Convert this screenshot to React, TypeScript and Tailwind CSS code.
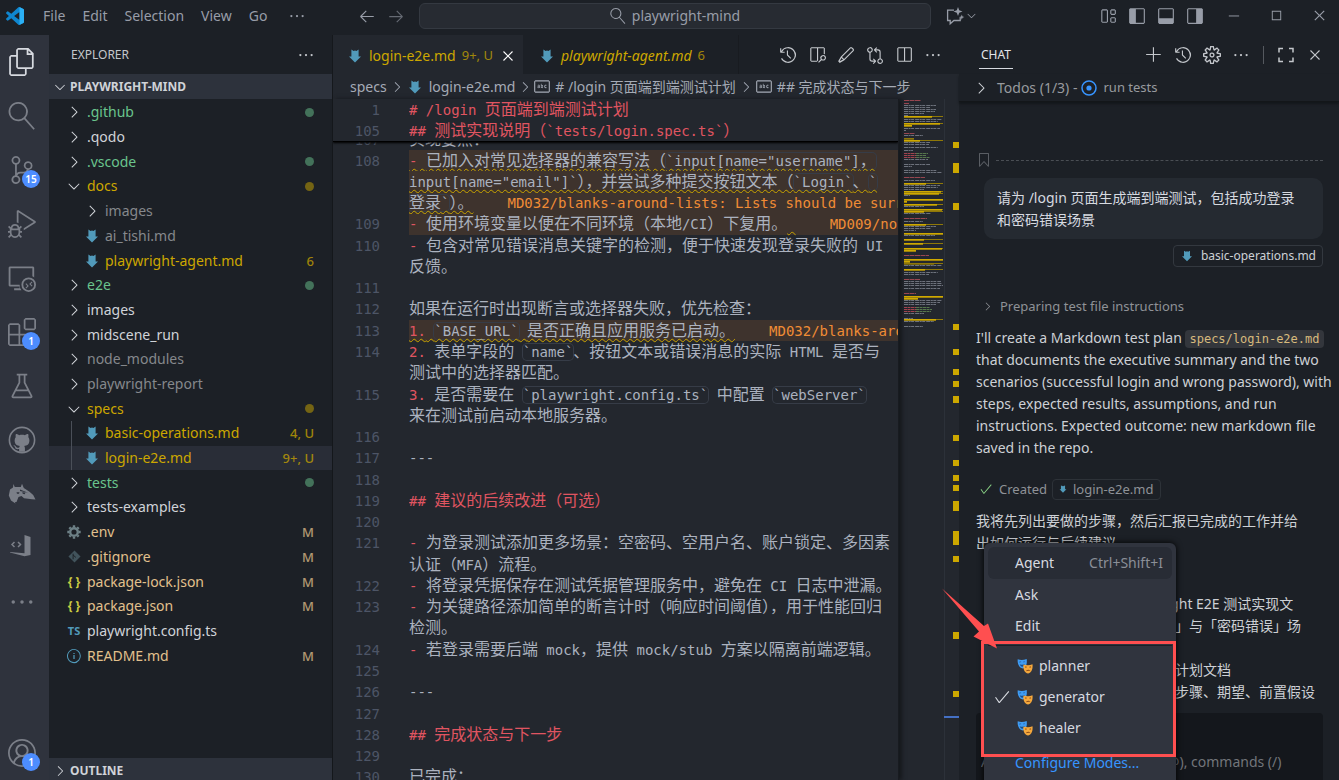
import React from 'react';
import clsx from 'clsx';
import {
  VscAccount,
  VscAdd,
  VscArrowLeft,
  VscArrowRight,
  VscBeaker,
  VscBookmark,
  VscCheck,
  VscChevronDown,
  VscChevronRight,
  VscChromeClose,
  VscChromeMaximize,
  VscChromeMinimize,
  VscClose,
  VscDebugAlt,
  VscEdit,
  VscEllipsis,
  VscExtensions,
  VscFiles,
  VscGitCompare,
  VscHistory,
  VscInfo,
  VscLayout,
  VscLayoutPanel,
  VscLayoutSidebarLeft,
  VscLayoutSidebarRight,
  VscOpenPreview,
  VscRemoteExplorer,
  VscSearch,
  VscSettingsGear,
  VscSourceControl,
  VscSplitHorizontal,
  VscSymbolString,
} from 'react-icons/vsc';

const CJK = /([\u2010-\u201f\u3000-\u303f\u4e00-\u9fff\uff00-\uffef]+)/;

// CJK glyphs are set a step larger than the monospace Latin text beside them
const Mixed: React.FC<{ children: string }> = ({ children }) => (
  <>
    {children.split(CJK).map((part, i) =>
      i % 2 ? (
        <span key={i} className="text-base leading-none">
          {part}
        </span>
      ) : (
        part
      )
    )}
  </>
);

const MarkdownIcon: React.FC<{ className?: string }> = ({ className = 'h-[14px] w-[12px]' }) => (
  <svg viewBox="0 0 12 14" className={clsx('shrink-0', className)} fill="#519aba">
    <path d="M2.4.6 4.6 2 6 1.4 7.4 2 9.6.6V7.4H12L6 13.4 0 7.4h2.4Z" />
  </svg>
);

const VsCodeLogo = () => (
  <svg viewBox="0 0 100 100" className="h-[18px] w-[18px]">
    <path
      fill="#0f86cf"
      d="M96.46 10.8 75.86.88a6.2 6.2 0 0 0-7.1 1.2L29.35 38.04 12.19 25.01a4.16 4.16 0 0 0-5.32.24L1.36 30.25a4.17 4.17 0 0 0 0 6.16L16.25 50 1.36 63.58a4.17 4.17 0 0 0 0 6.16l5.5 5.01c1.5 1.35 3.73 1.45 5.33.24l17.17-13.03 39.4 35.96a6.2 6.2 0 0 0 7.1 1.2l20.6-9.91A6.25 6.25 0 0 0 100 83.58V16.41a6.25 6.25 0 0 0-3.54-5.63ZM75 72.7 45.1 50 75 27.3Z"
    />
    <path fill="#2bb0f5" d="M75 .6 96.5 10.8a6.2 6.2 0 0 1 3.5 5.6v67.2a6.2 6.2 0 0 1-3.5 5.6L75 99.4Z" />
  </svg>
);

const GithubIcon = () => (
  <svg viewBox="0 0 28 28" className="h-7 w-7">
    <circle cx="14" cy="14" r="12.6" fill="none" stroke="currentColor" strokeWidth="1.6" />
    <path
      transform="translate(2.4 3.2) scale(1.45)"
      fill="currentColor"
      d="M5.47 15.59c.4.07.55-.17.55-.38 0-.19-.01-.82-.01-1.49-2.01.37-2.53-.49-2.69-.94-.09-.23-.48-.94-.82-1.13-.28-.15-.68-.52-.01-.53.63-.01 1.08.58 1.23.82.72 1.21 1.87.87 2.33.66.07-.52.28-.87.51-1.07-1.78-.2-3.64-.89-3.64-3.95 0-.87.31-1.59.82-2.15-.08-.2-.36-1.02.08-2.12 0 0 .67-.21 2.2.82.64-.18 1.32-.27 2-.27.68 0 1.36.09 2 .27 1.53-1.04 2.2-.82 2.2-.82.44 1.1.16 1.92.08 2.12.51.56.82 1.27.82 2.15 0 3.07-1.87 3.75-3.65 3.95.29.25.54.73.54 1.48v2.2c0 .21.15.46.55.38Z"
    />
  </svg>
);

const WolfIcon = () => (
  <svg viewBox="0 0 28 28" className="h-7 w-7" fill="currentColor">
    <path d="M5 7.500 5.400 4 6.800 7h6L14 3.700l1.800 4.300 5.700 3.800 3.700 3.200 2.300 4.500-3.500-.3-8-.9-2.500-2.300-3 1-2 5H7l.5 1.500L3 20.500.8 15.500 2 9.500Z" />
    <path fill="#2f333d" d="M8.500 12.200h3l-.5 1.600H9ZM14.200 12.200l3.300.4-.8 1.700-1.900-.5ZM12 9.500l8 3.300-8-1.800Z" />
  </svg>
);

const DevKitIcon = () => (
  <svg viewBox="0 0 28 28" className="h-7 w-7" fill="currentColor">
    <path d="M16.500 1 22.500 3v18l-6 1.300L2 18.500v-.6l14.500 1.400Z" />
    <path fill="none" stroke="currentColor" strokeWidth="1.5" d="M6.500 8 4 10.500l2.500 2.500M10 8l2.500 2.500L10 13" />
  </svg>
);

const MasksIcon = () => (
  <svg viewBox="0 0 16 16" className="h-4 w-4 shrink-0">
    <path fill="#3f9cf3" d="M.7 1.2c2.800 1.200 5.800 1 9-.2.6 4.500-.3 8.500-4 9.400C2.200 9.800.2 5.800.7 1.200Z" />
    <path fill="#1a4c86" d="M2.300 4c.8-.7 1.500-.6 2 .1l-2 .3ZM6.200 4c.8-.7 1.500-.6 2 .1l-2 .2ZM2.800 6.200c1.700.8 3.300.7 5-.2-.5 1.900-1.400 2.700-2.500 2.800-1.200-.2-2.100-1.100-2.500-2.600Z" />
    <path fill="#f5a83c" d="M6.500 6.400c3 1 6 1 9-.1.5 4-.6 8.400-4.300 9.200-3.600-.5-5.400-4.500-4.700-9.100Z" />
    <path fill="#7c3f12" d="M8 9c.8-.7 1.500-.6 2.100.2L8 9.500ZM12 9.200c.7-.8 1.500-.8 2.100-.2l-.2.5ZM8.600 13.300c1.600-2 3.400-2 5-.1-1.600-.6-3.400-.6-5 .1Z" />
  </svg>
);

const CopilotChatIcon = () => (
  <svg viewBox="0 0 20 20" className="h-5 w-5" fill="none" stroke="currentColor" strokeWidth="1.300">
    <path d="M9 4.200H2.600v10.300h2.600v3.300l3.700-3.300h6.300v-3.200" />
    <path fill="currentColor" stroke="none" d="m13 1 1.200 3.300L17.500 5.500l-3.300 1.200L13 10l-1.200-3.300L8.500 5.500l3.300-1.200ZM16.800 8.500l.7 1.900 1.900.7-1.900.7-.7 1.900-.7-1.900-1.900-.7 1.900-.7Z" />
  </svg>
);

const CornersIcon = () => (
  <svg viewBox="0 0 18 18" className="h-[18px] w-[18px]" fill="none" stroke="currentColor" strokeWidth="1.500">
    <path d="M2 6.500V2.500h4M12 2.500h4v4M16 11.500v4h-4M6 15.500H2v-4" />
  </svg>
);

const ProgressTarget = () => (
  <svg viewBox="0 0 16 16" className="h-4 w-4 shrink-0">
    <circle cx="8" cy="8" r="7" fill="none" stroke="#3794ff" strokeWidth="1.500" />
    <circle cx="8" cy="8" r="2.600" fill="#3794ff" />
  </svg>
);

const GitIcon = () => (
  <svg viewBox="0 0 14 14" className="h-[13px] w-[13px]">
    <path fill="#41535b" d="M7 .5 13.500 7 7 13.500.5 7Z" />
    <path stroke="#1c2026" strokeWidth="1" fill="none" d="M5.500 4v6M5.500 5.500 8.500 8" />
  </svg>
);

const GearFileIcon = () => (
  <svg viewBox="0 0 14 14" className="h-[14px] w-[14px]" fill="none" stroke="#6d8086">
    <circle cx="7" cy="7" r="3.800" strokeWidth="2.400" />
    <path strokeWidth="2.400" d="M7 .3v2M7 11.700v2M.3 7h2M11.700 7h2M2.300 2.300l1.400 1.400M10.300 10.300l1.400 1.400M2.300 11.700l1.400-1.400M10.300 3.700l1.400-1.400" />
  </svg>
);

/* ---------- title bar ---------- */

const TitleBar = () => (
  <header className="flex h-[35px] shrink-0 items-center bg-[#1c2026] pb-1 text-sm text-[#989da8]">
    <div className="flex w-[419px] shrink-0 items-center">
      <div className="w-[43px] pl-[6px]">
        <VsCodeLogo />
      </div>
      <nav className="flex items-center gap-[17px]">
        {['File', 'Edit', 'Selection', 'View', 'Go'].map((item) => (
          <button key={item}>{item}</button>
        ))}
        <button aria-label="More menus" className="pl-1">
          <VscEllipsis size={18} />
        </button>
      </nav>
      <div className="ml-auto flex gap-[11px] pr-[14px]">
        <button aria-label="Back">
          <VscArrowLeft size={18} />
        </button>
        <button aria-label="Forward" className="opacity-60">
          <VscArrowRight size={18} />
        </button>
      </div>
    </div>
    <button className="flex h-[26px] min-w-0 flex-1 items-center justify-center gap-[6px] rounded-md border border-[#343941] bg-[#272b32]">
      <VscSearch size={16} className="-scale-x-100" />
      playwright-mind
    </button>
    <div className="flex w-[408px] shrink-0 items-center">
      <button aria-label="Copilot" className="flex items-center pl-[14px]">
        <CopilotChatIcon />
        <VscChevronDown size={13} />
      </button>
      <div className="ml-auto flex gap-[11px] pr-[22px]">
        <button aria-label="Customize layout">
          <VscLayout size={18} />
        </button>
        <button aria-label="Toggle side bar">
          <VscLayoutSidebarLeft size={18} />
        </button>
        <button aria-label="Toggle panel">
          <VscLayoutPanel size={18} />
        </button>
        <button aria-label="Toggle secondary side bar">
          <VscLayoutSidebarRight size={18} />
        </button>
      </div>
      <div className="flex gap-[28px] pr-[12px]">
        <button aria-label="Minimize">
          <VscChromeMinimize size={15} />
        </button>
        <button aria-label="Maximize">
          <VscChromeMaximize size={15} />
        </button>
        <button aria-label="Close">
          <VscChromeClose size={15} />
        </button>
      </div>
    </div>
  </header>
);

/* ---------- activity bar ---------- */

interface Activity {
  label: string;
  icon: React.ReactNode;
  badge?: string;
  active?: boolean;
}

const activities: Activity[] = [
  { label: 'Explorer', icon: <VscFiles size={28} />, active: true },
  { label: 'Search', icon: <VscSearch size={28} className="-scale-x-100" /> },
  { label: 'Source control', icon: <VscSourceControl size={28} />, badge: '15' },
  { label: 'Run and debug', icon: <VscDebugAlt size={28} /> },
  { label: 'Remote explorer', icon: <VscRemoteExplorer size={28} /> },
  { label: 'Extensions', icon: <VscExtensions size={28} />, badge: '1' },
  { label: 'Testing', icon: <VscBeaker size={28} /> },
  { label: 'GitHub', icon: <GithubIcon /> },
  { label: 'Wolf', icon: <WolfIcon /> },
  { label: 'Dev kit', icon: <DevKitIcon /> },
  { label: 'More', icon: <VscEllipsis size={28} /> },
];

const ActivityButton: React.FC<Activity> = ({ label, icon, badge, active }) => (
  <button
    aria-label={label}
    className={clsx('relative flex h-[54px] w-full items-center pl-[8px]', active ? 'text-[#d7dae0]' : 'text-[#7b7f88]')}
  >
    {icon}
    {badge && (
      <span className="absolute top-[27px] left-[22px] flex h-[18px] w-[18px] items-center justify-center rounded-full bg-[#4d8dff] text-[10px] font-semibold text-white">
        {badge}
      </span>
    )}
  </button>
);

const ActivityBar = () => (
  <aside className="flex w-[49px] shrink-0 flex-col bg-[#2f333d]">
    {activities.map((a) => (
      <ActivityButton key={a.label} {...a} />
    ))}
    <div className="mt-auto">
      <ActivityButton label="Account" icon={<VscAccount size={28} />} badge="1" />
    </div>
  </aside>
);

/* ---------- explorer ---------- */

type Tone = 'green' | 'yellow' | 'plain' | 'ignored' | 'modified';

interface TreeRow {
  name: string;
  tone: Tone;
  kind: 'closed' | 'open' | 'md' | 'env' | 'git' | 'json' | 'ts' | 'info';
  nested?: boolean;
  guide?: boolean;
  selected?: boolean;
  status?: string;
  dot?: boolean;
}

const toneClass: Record<Tone, string> = {
  green: 'text-[#6ac48d]',
  yellow: 'text-[#cca700]',
  plain: 'text-[#d0d3d8]',
  ignored: 'text-[#85888c]',
  modified: 'text-[#e2c08d]',
};

const tree: TreeRow[] = [
  { name: '.github', tone: 'green', kind: 'closed', dot: true },
  { name: '.qodo', tone: 'plain', kind: 'closed' },
  { name: '.vscode', tone: 'green', kind: 'closed', dot: true },
  { name: 'docs', tone: 'yellow', kind: 'open', dot: true },
  { name: 'images', tone: 'ignored', kind: 'closed', nested: true },
  { name: 'ai_tishi.md', tone: 'ignored', kind: 'md', nested: true },
  { name: 'playwright-agent.md', tone: 'yellow', kind: 'md', nested: true, status: '6' },
  { name: 'e2e', tone: 'green', kind: 'closed', dot: true },
  { name: 'images', tone: 'plain', kind: 'closed' },
  { name: 'midscene_run', tone: 'plain', kind: 'closed' },
  { name: 'node_modules', tone: 'ignored', kind: 'closed' },
  { name: 'playwright-report', tone: 'ignored', kind: 'closed' },
  { name: 'specs', tone: 'yellow', kind: 'open', dot: true },
  { name: 'basic-operations.md', tone: 'yellow', kind: 'md', nested: true, guide: true, status: '4, U' },
  { name: 'login-e2e.md', tone: 'yellow', kind: 'md', nested: true, guide: true, status: '9+, U', selected: true },
  { name: 'tests', tone: 'green', kind: 'closed', dot: true },
  { name: 'tests-examples', tone: 'plain', kind: 'closed' },
  { name: '.env', tone: 'modified', kind: 'env', status: 'M' },
  { name: '.gitignore', tone: 'modified', kind: 'git', status: 'M' },
  { name: 'package-lock.json', tone: 'modified', kind: 'json', status: 'M' },
  { name: 'package.json', tone: 'modified', kind: 'json', status: 'M' },
  { name: 'playwright.config.ts', tone: 'plain', kind: 'ts' },
  { name: 'README.md', tone: 'modified', kind: 'info', status: 'M' },
];

const kindIcon: Record<TreeRow['kind'], React.ReactNode> = {
  closed: <VscChevronRight size={18} className="shrink-0 text-[#d0d3d8]" />,
  open: <VscChevronDown size={18} className="shrink-0 text-[#d0d3d8]" />,
  md: <MarkdownIcon />,
  env: <GearFileIcon />,
  git: <GitIcon />,
  json: <span className="text-xs font-bold text-[#cbcb41]">{'{ }'}</span>,
  ts: <span className="text-[11px] font-bold text-[#519aba]">TS</span>,
  info: <VscInfo size={16} className="text-[#519aba]" />,
};

const Explorer = () => (
  <section className="flex w-[284px] shrink-0 flex-col border-r border-[#15181c] bg-[#1c2026] text-sm">
    <div className="flex h-[39px] shrink-0 items-center justify-between pr-[17px] pl-[22px] text-xs text-[#c4c7cc]">
      EXPLORER
      <button aria-label="Explorer actions">
        <VscEllipsis size={18} />
      </button>
    </div>
    <button className="flex h-[25px] shrink-0 items-center gap-[2px] bg-[#2d323c] pl-[3px] text-xs font-bold text-[#d0d3d8]">
      <VscChevronDown size={16} />
      PLAYWRIGHT-MIND
    </button>
    <ul className="mt-px grid h-[568px] shrink-0 auto-rows-fr">
      {tree.map((row, i) => (
        <li
          key={i}
          className={clsx('flex min-h-0 items-center pr-[18px] pl-[17px]', toneClass[row.tone], row.selected && 'bg-[#292d37]')}
        >
          {row.nested && (
            <span className={clsx('mr-[12px] ml-[5px] w-px self-stretch', row.guide && 'bg-[#4a4f58]')} />
          )}
          <span className="mr-[5px] flex w-4 shrink-0 justify-center leading-none">{kindIcon[row.kind]}</span>
          <span className="flex-1 leading-5">{row.name}</span>
          {row.status && <span className="text-[13px] leading-5 font-medium opacity-75">{row.status}</span>}
          {row.dot && <span className="h-[9px] w-[9px] rounded-full bg-current opacity-50" />}
        </li>
      ))}
    </ul>
    <button className="mt-auto flex h-[22px] shrink-0 items-center gap-[2px] bg-[#2d323c] pt-[4px] pl-[3px] text-xs font-bold text-[#d0d3d8]">
      <VscChevronRight size={16} />
      OUTLINE
    </button>
  </section>
);

/* ---------- editor ---------- */

const EditorTabs = () => (
  <div className="flex h-[39px] shrink-0 bg-[#1c2026] text-sm text-[#cca700]">
    <div className="flex w-[190px] items-center bg-[#23272e] pt-[2px] pl-[16px]">
      <MarkdownIcon />
      <span className="ml-[8px]">login-e2e.md</span>
      <span className="ml-[6px] text-[13px] opacity-75">9+, U</span>
      <button aria-label="Close tab" className="ml-auto pr-[6px] text-white">
        <VscClose size={18} />
      </button>
    </div>
    <div className="flex w-[216px] items-center border-r border-[#181b20] pt-[2px] pl-[18px]">
      <MarkdownIcon />
      <span className="ml-[8px] italic">playwright-agent.md</span>
      <span className="ml-[6px] text-[13px] opacity-75">6</span>
    </div>
    <div className="ml-auto flex items-center gap-[11px] pr-[17px] text-[#c4c7cc]">
      <button aria-label="Timeline">
        <VscHistory size={18} />
      </button>
      <button aria-label="Open preview">
        <VscOpenPreview size={18} />
      </button>
      <button aria-label="Edit">
        <VscEdit size={18} />
      </button>
      <button aria-label="Compare changes">
        <VscGitCompare size={18} />
      </button>
      <button aria-label="Split editor">
        <VscSplitHorizontal size={18} />
      </button>
      <button aria-label="More actions">
        <VscEllipsis size={18} />
      </button>
    </div>
  </div>
);

const Breadcrumbs = () => (
  <div className="flex h-[25px] shrink-0 items-center overflow-hidden bg-[#23272e] pl-[17px] text-sm whitespace-nowrap text-[#a5abb6]">
    specs
    <VscChevronRight size={16} className="mr-[4px] ml-[2px] shrink-0" />
    <MarkdownIcon />
    <span className="ml-[8px]">login-e2e.md</span>
    <VscChevronRight size={16} className="ml-[2px] shrink-0" />
    <VscSymbolString size={18} className="mr-[4px] shrink-0" />
    <span># /login 页面端到端测试计划</span>
    <VscChevronRight size={16} className="mr-[1px] ml-[2px] shrink-0" />
    <VscSymbolString size={18} className="mr-[4px] shrink-0" />
    <span>## 完成状态与下一步</span>
  </div>
);

const InlineCode: React.FC<{ children: string }> = ({ children }) => (
  <span className="rounded ring-1 ring-[#363c47]">
    <Mixed>{children}</Mixed>
  </span>
);

const Bullet: React.FC<{ children: string }> = ({ children }) => <span className="text-[#e05561]">{children}</span>;

const Squiggle: React.FC<{ children: React.ReactNode }> = ({ children }) => (
  <span className="underline decoration-[#c9a500] decoration-wavy decoration-1 underline-offset-2 [text-decoration-skip-ink:none]">
    {children}
  </span>
);

const Lint: React.FC<{ children: string }> = ({ children }) => <span className="ml-[34px] text-[#f08c35]">{children}</span>;

interface CodeRow {
  no?: number;
  body?: React.ReactNode;
  warn?: boolean;
}

const heading = (text: string) => (
  <span className="text-[#e05561]">
    <Mixed>{text}</Mixed>
  </span>
);

const item = (marker: string, text: string) => (
  <>
    <Bullet>{marker}</Bullet>
    <Mixed>{' ' + text}</Mixed>
  </>
);

const rows: CodeRow[] = [
  {
    no: 108,
    warn: true,
    body: (
      <Squiggle>
        {item('-', '已加入对常见选择器的兼容写法（')}
        <InlineCode>{'`input[name="username"]，'}</InlineCode>
      </Squiggle>
    ),
  },
  {
    warn: true,
    body: (
      <Squiggle>
        <Mixed>{'input[name="email"]`），并尝试多种提交按钮文本（'}</Mixed>
        <InlineCode>`Login`</InlineCode>
        <Mixed>、</Mixed>
        <InlineCode>`</InlineCode>
      </Squiggle>
    ),
  },
  {
    warn: true,
    body: (
      <>
        <Squiggle>
          <InlineCode>登录`</InlineCode>
          <Mixed>）。</Mixed>
        </Squiggle>
        <Lint>MD032/blanks-around-lists: Lists should be surrounded by blank lines</Lint>
      </>
    ),
  },
  {
    no: 109,
    warn: true,
    body: (
      <>
        {item('-', '使用环境变量以便在不同环境（本地/CI）下复用。')}
        <Squiggle> </Squiggle>
        <Lint>MD009/no-trailing-spaces</Lint>
      </>
    ),
  },
  { no: 110, body: item('-', '包含对常见错误消息关键字的检测，便于快速发现登录失败的 UI') },
  { body: <Mixed>反馈。</Mixed> },
  { no: 111 },
  { no: 112, body: <Mixed>如果在运行时出现断言或选择器失败，优先检查：</Mixed> },
  {
    no: 113,
    warn: true,
    body: (
      <>
        <Squiggle>
          <Bullet>1.</Bullet> <InlineCode>`BASE_URL`</InlineCode>
          <Mixed> 是否正确且应用服务已启动。</Mixed>
        </Squiggle>
        <Lint>MD032/blanks-around-lists</Lint>
      </>
    ),
  },
  {
    no: 114,
    body: (
      <>
        {item('2.', '表单字段的 ')}
        <InlineCode>`name`</InlineCode>
        <Mixed>、按钮文本或错误消息的实际 HTML 是否与</Mixed>
      </>
    ),
  },
  { body: <Mixed>测试中的选择器匹配。</Mixed> },
  {
    no: 115,
    body: (
      <>
        {item('3.', '是否需要在 ')}
        <InlineCode>`playwright.config.ts`</InlineCode>
        <Mixed> 中配置 </Mixed>
        <InlineCode>`webServer`</InlineCode>
      </>
    ),
  },
  { body: <Mixed>来在测试前启动本地服务器。</Mixed> },
  { no: 116 },
  { no: 117, body: '---' },
  { no: 118 },
  { no: 119, body: heading('## 建议的后续改进（可选）') },
  { no: 120 },
  { no: 121, body: item('-', '为登录测试添加更多场景：空密码、空用户名、账户锁定、多因素') },
  { body: <Mixed>认证（MFA）流程。</Mixed> },
  { no: 122, body: item('-', '将登录凭据保存在测试凭据管理服务中，避免在 CI 日志中泄漏。') },
  { no: 123, body: item('-', '为关键路径添加简单的断言计时（响应时间阈值），用于性能回归') },
  { body: <Mixed>检测。</Mixed> },
  { no: 124, body: item('-', '若登录需要后端 mock，提供 mock/stub 方案以隔离前端逻辑。') },
  { no: 125 },
  { no: 126, body: '---' },
  { no: 127 },
  { no: 128, body: heading('## 完成状态与下一步') },
  { no: 129 },
  { no: 130, body: <Mixed>已完成：</Mixed> },
];

const CodeLine: React.FC<CodeRow> = ({ no, body, warn }) => (
  <div className="flex min-h-0 items-center">
    <span className="w-[47px] shrink-0 text-right leading-5 text-[#4d5566]">{no}</span>
    <div className={clsx('ml-[29px] flex min-w-0 flex-1 items-center self-stretch overflow-x-clip', warn && 'bg-[#3e332d]')}>
      <span className="leading-5 whitespace-pre">{body}</span>
    </div>
  </div>
);

type Mark = [y: number, width: number, color: 'r' | 'g' | 'y' | 'd' | 't' | 'k'];

// r heading, g text, y warning, d warning tail, t code block, k short stub
const minimap: Mark[] = [
  [1, 17, 'r'], [4, 5, 'r'], [6, 32, 'g'], [8, 26, 'g'], [10, 32, 'g'], [12, 31, 'g'], [14, 20, 'k'], [16, 4, 'k'],
  [17, 28, 'y'], [20, 38, 'g'], [22, 34, 'g'], [24, 36, 'y'], [26, 8, 'y'], [29, 36, 'g'], [31, 2, 'k'],
  [34, 11, 'r'], [36, 19, 'g'], [39, 10, 'd'], [41, 16, 'y'], [43, 26, 'g'], [45, 25, 'g'], [48, 34, 'g'], [51, 9, 'k'],
  [54, 24, 't'], [56, 22, 't'], [58, 26, 't'], [60, 24, 'g'], [65, 26, 'g'], [67, 8, 'k'], [71, 33, 'g'], [73, 38, 'g'],
  [78, 21, 'r'], [81, 31, 'g'], [84, 22, 'y'], [86, 36, 'g'], [88, 34, 'g'], [90, 20, 'k'], [92, 37, 'y'], [94, 35, 'y'],
  [96, 6, 'k'], [100, 39, 'y'], [102, 3, 'y'], [105, 33, 'y'], [107, 20, 'g'], [110, 38, 'y'], [112, 20, 'y'], [114, 27, 'g'],
  [119, 23, 'r'], [122, 19, 'g'], [125, 22, 'y'], [127, 32, 'g'], [129, 27, 'g'], [131, 12, 'k'], [134, 39, 'y'],
  [136, 31, 'g'], [140, 20, 'y'], [144, 19, 'y'], [149, 38, 'y'], [151, 12, 'y'], [156, 25, 'r'], [160, 39, 'y'], [162, 6, 'y'],
  [164, 30, 'd'], [166, 38, 'g'], [170, 21, 'y'], [173, 34, 'g'], [175, 25, 'g'], [180, 16, 'r'], [182, 37, 'g'],
  [184, 38, 'g'], [186, 39, 'g'], [189, 36, 'g'], [194, 12, 'r'], [197, 39, 'y'], [199, 14, 'y'], [201, 38, 'g'],
  [203, 36, 'g'], [205, 32, 'g'], [208, 26, 't'], [210, 28, 't'], [212, 27, 't'], [214, 20, 'g'], [219, 9, 'k'],
  [220, 32, 'y'], [222, 30, 'g'], [227, 19, 'g'],
];

const rulerMarks: [number, number][] = [
  [43, 6], [64, 10], [104, 7], [225, 6], [250, 6], [270, 6], [282, 6], [297, 7], [336, 6], [361, 6],
  [376, 6], [386, 6], [402, 10], [432, 14], [457, 6], [533, 7], [592, 6],
];

const Minimap = () => (
  <svg className="h-full w-[60px] shrink-0" preserveAspectRatio="xMinYMin slice" aria-label="Minimap">
    <path d="M45.500 0V900" stroke="#2c3139" />
    {minimap.map(([y, width, color], i) => {
      if (color === 'y' || color === 'd') {
        return (
          <g key={i}>
            {width > 15 && <rect x="5" y={y} width="39" height="1" fill="#8f7808" />}
            <rect x="5" y={y} width={width} height="1.700" fill={color === 'y' ? '#cfa900' : '#8f7808'} />
          </g>
        );
      }
      if (color === 't') {
        return (
          <g key={i} strokeWidth="1.200" strokeDasharray="3 .5">
            <path d={`M5 ${y + 0.5}H17`} stroke="#a2434e" />
            <path d={`M17 ${y + 0.5}H${5 + width}`} stroke="#56774c" />
          </g>
        );
      }
      return (
        <path
          key={i}
          d={`M5 ${y + 0.5}H${5 + width}`}
          stroke={color === 'r' ? '#984650' : '#6d727c'}
          strokeDasharray={color === 'r' ? '5 .5' : '4 .6 2 .5 3 1'}
          strokeWidth="1.100"
        />
      );
    })}
    {rulerMarks.map(([y, h]) => (
      <rect key={y} x="54" y={y} width="6" height={h} fill="#cca700" />
    ))}
    <rect x="45" y="617" width="15" height="2" fill="#4470c4" />
  </svg>
);

const Editor = () => (
  <main className="flex min-w-0 flex-1 flex-col bg-[#23272e]">
    <EditorTabs />
    <Breadcrumbs />
    <div className="flex min-h-0 flex-1">
      <div className="flex min-w-0 flex-1 flex-col overflow-hidden border-r border-[#181b20] font-['DejaVu_Sans_Mono','Noto_Sans_CJK_SC',monospace] text-sm text-[#abb2bf] shadow-[3px_0_4px_#15181c]">
        <div className="z-10 grid h-[43px] shrink-0 auto-rows-fr border-b border-black bg-[#23272e] shadow-[0_1px_2px_#000]">
          <CodeLine no={1} body={heading('# /login 页面端到端测试计划')} />
          <CodeLine no={105} body={heading('## 测试实现说明（`tests/login.spec.ts`）')} />
        </div>
        <div className="flex h-[8px] shrink-0 items-end overflow-hidden">
          <CodeLine no={107} body={<Mixed>实现要点：</Mixed>} />
        </div>
        <div className="grid h-[638px] shrink-0 auto-rows-fr">
          {rows.map((row, i) => (
            <CodeLine key={i} {...row} />
          ))}
        </div>
      </div>
      <Minimap />
    </div>
  </main>
);

/* ---------- chat ---------- */

const modes = ['planner', 'generator', 'healer'];

const ModeMenu = () => (
  <div className="absolute top-[508px] left-[25px] z-20 h-[260px] w-[192px] rounded-t-md bg-[#30343e] px-1 pt-1 text-sm text-[#d7dae0] shadow-[0_0_6px_#000]" role="menu">
    <button role="menuitem" className="flex h-8 w-full items-center justify-between rounded-md bg-[#282c35] pr-[9px] pl-[27px]">
      Agent <span className="text-[#8b8f98]">Ctrl+Shift+I</span>
    </button>
    <button role="menuitem" className="flex h-[31px] w-full items-center pl-[27px]">
      Ask
    </button>
    <button role="menuitem" className="flex h-[31px] w-full items-center pl-[27px]">
      Edit
    </button>
    <div className="my-[4px] h-px bg-[#1c2026]" />
    {modes.map((mode) => (
      <button key={mode} role="menuitem" className="flex h-[31px] w-full items-center">
        <span className="w-[29px] pl-[5px]">{mode === 'generator' && <VscCheck size={18} />}</span>
        <MasksIcon />
        <span className="ml-[6px]">{mode}</span>
      </button>
    ))}
    <button role="menuitem" className="mt-[4px] flex h-[31px] w-full items-center pl-[27px] text-[#3794ff]">
      Configure Modes...
    </button>
    <div className="pointer-events-none absolute top-[98px] -left-[3px] h-[116px] w-[195px] border-[3px] border-[#ff4f50]" />
    <svg viewBox="0 0 56 62" className="pointer-events-none absolute top-[45px] -left-[43px] h-[62px] w-[56px]">
      <path fill="#ff4f50" d="M1 .5 43 38 47 35.500 56 60.500 32.500 48.500 38 43.500Z" />
    </svg>
  </div>
);

const Chat = () => (
  <section className="relative flex w-[380px] shrink-0 flex-col bg-[#1c2026] text-sm whitespace-nowrap text-[#cdd0d5]">
    <div className="flex h-[39px] shrink-0 items-center pr-[15px] pl-[20px] text-[#c4c7cc]">
      <button className="mt-[2px] h-[26px] border-b border-[#d7dae0] px-[2px] text-xs text-[#e3e5e9]">CHAT</button>
      <div className="ml-auto flex items-center gap-[11px]">
        <button aria-label="New chat">
          <VscAdd size={18} />
        </button>
        <button aria-label="Chat history">
          <VscHistory size={18} />
        </button>
        <button aria-label="Configure chat">
          <VscSettingsGear size={18} />
        </button>
        <button aria-label="More chat actions">
          <VscEllipsis size={18} />
        </button>
        <span className="mx-[2px] h-[18px] w-px bg-[#55595f]" />
        <button aria-label="Maximize chat">
          <CornersIcon />
        </button>
        <button aria-label="Close chat">
          <VscClose size={18} />
        </button>
      </div>
    </div>
    <button className="flex h-[28px] shrink-0 items-center border-b border-[#131619] pl-[13px] text-[#989b9f] shadow-[0_2px_2px_#14171b]">
      <VscChevronRight size={18} className="mr-[7px] text-[#cdd0d5]" />
      Todos (1/3) -
      <span className="mr-[6px] ml-[4px]">
        <ProgressTarget />
      </span>
      <span className="text-[13px]">run tests</span>
    </button>

    <div className="flex flex-1 flex-col overflow-hidden pr-[16px] pl-[17px]">
      <div className="mt-[50px] flex h-[16px] items-center gap-[4px] text-[#5a5e64]">
        <VscBookmark size={16} className="shrink-0" />
        <div className="flex-1 border-t border-dashed border-[#4a4e54]" />
      </div>
      <p className="mt-[10px] ml-[8px] h-[61px] rounded-[10px] bg-[#252a31] py-[9px] pl-[13px] leading-[22px] text-[#d7dae0]">
        请为 /login 页面生成端到端测试，包括成功登录
        <br />
        和密码错误场景
      </p>
      <a href="#basic-operations" className="mt-[6px] flex h-[22px] items-center gap-[9px] self-end rounded border border-[#33383f] pr-[6px] pl-[8px] text-xs">
        <MarkdownIcon className="h-[12px] w-[10px]" />
        basic-operations.md
      </a>
      <button className="mt-[28px] flex h-[22px] items-center gap-[6px] self-start pl-[5px] text-[13px] text-[#8f9297]">
        <VscChevronRight size={13} />
        Preparing test file instructions
      </button>
      <p className="mt-[10px] leading-[22px]">
        I'll create a Markdown test plan{' '}
        <code className="rounded bg-[#33363c] px-[4px] py-[2px] font-['DejaVu_Sans_Mono',monospace] text-xs text-[#d7ba7d]">specs/login-e2e.md</code>
        <br />
        that documents the executive summary and the two
        <br />
        scenarios (successful login and wrong password), with
        <br />
        steps, expected results, assumptions, and run
        <br />
        instructions. Expected outcome: new markdown file
        <br />
        saved in the repo.
      </p>
      <div className="mt-[19px] flex h-[22px] items-center text-[13px] text-[#8f9297]">
        <VscCheck size={14} className="mr-[6px] ml-[3px] text-[#89d185]" />
        Created
        <a href="#login-e2e" className="ml-[5px] flex h-[21px] items-center gap-[6px] rounded border border-[#2d3238] px-[6px]">
          <MarkdownIcon className="h-[8px] w-[8px]" />
          login-e2e.md
        </a>
      </div>
      <p className="mt-[10px] leading-[22px]">
        我将先列出要做的步骤，然后汇报已完成的工作并给
        <br />
        出如何运行与后续建议
      </p>
      <ul className="mt-[39px] ml-[31px] leading-[22px]">
        <li>已经添加了对应的 Playwright E2E 测试实现文</li>
        <li>件，并且覆盖了「成功登录」与「密码错误」场</li>
        <li>景</li>
        <li>在仓库中保存了完整的测试计划文档</li>
        <li>文档里面包含了执行摘要与步骤、期望、前置假设</li>
      </ul>
      <div className="mt-[10px] flex-1 rounded-t bg-[#14171c] pt-[39px] pl-[5px]">
        <input
          aria-label="Chat input"
          placeholder="Add context (#), extensions (@), commands (/)"
          className="w-full bg-transparent outline-none placeholder:text-[#72757a]"
        />
      </div>
    </div>
    <ModeMenu />
  </section>
);

const App = () => (
  <div className="flex h-screen flex-col overflow-hidden bg-[#1c2026] font-['Noto_Sans','Noto_Sans_CJK_SC',sans-serif]">
    <TitleBar />
    <div className="flex min-h-0 flex-1">
      <ActivityBar />
      <Explorer />
      <Editor />
      <Chat />
    </div>
  </div>
);

export default App;
